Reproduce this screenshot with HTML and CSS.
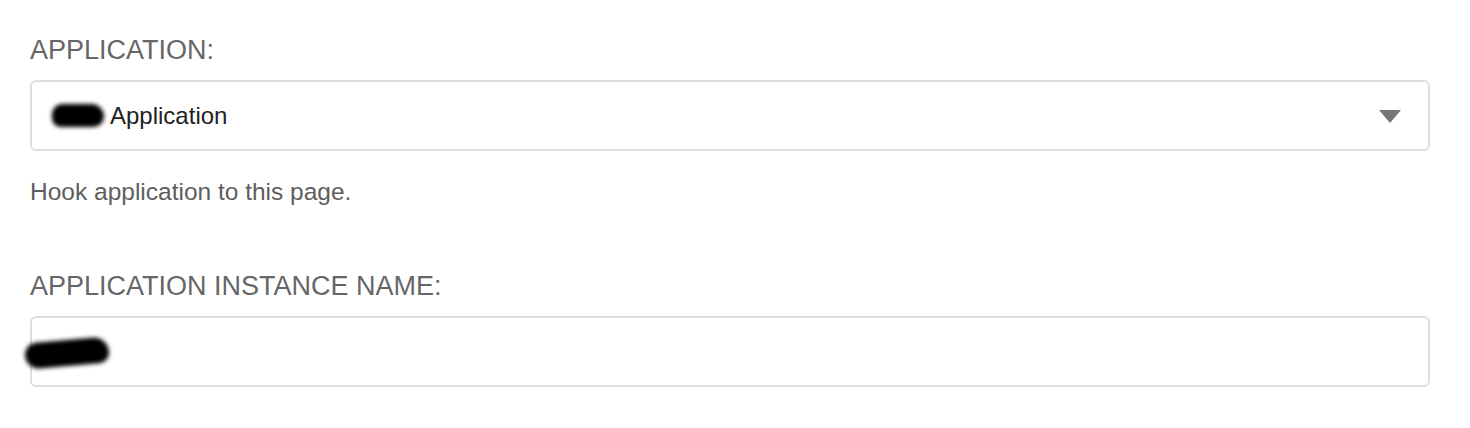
FILE: index.html
```html
<!DOCTYPE html>
<html>
<head>
<meta charset="utf-8">
<link rel="stylesheet" href="styles.css">
</head>
<body>
<div class="form">
  <div class="field">
    <label class="label">APPLICATION:</label>
    <div class="select">
      <span class="blob blob-a"></span>
      <span class="select-text">Application</span>
      <svg class="caret" width="22" height="13" viewBox="0 0 22 13"><path d="M0 0 H22 L11 13 Z" fill="#777"/></svg>
    </div>
    <p class="help">Hook application to this page.</p>
  </div>
  <div class="field field-2">
    <label class="label">APPLICATION INSTANCE NAME:</label>
    <div class="input">
      <span class="blob blob-b"></span>
    </div>
  </div>
</div>
</body>
</html>
```
FILE: styles.css
```css
html, body {
  margin: 0;
  padding: 0;
  background: #fff;
}
body {
  font-family: "Liberation Sans", Arial, Helvetica, sans-serif;
  width: 1470px;
  height: 428px;
  overflow: hidden;
}
.form {
  padding: 35px 40px 0 30px;
}
.field {
  display: flex;
  flex-direction: column;
}
.field-2 {
  margin-top: 65px;
}
.label {
  display: block;
  font-size: 27px;
  line-height: 31px;
  color: #666;
  margin: 0 0 14px 0;
}
.select, .input {
  box-sizing: border-box;
  width: 1400px;
  height: 71px;
  border: 2px solid #dedede;
  border-radius: 6px;
  display: flex;
  align-items: center;
  padding: 0 27px 0 20px;
  background: #fff;
}
.select-text {
  font-size: 24px;
  color: #222;
  margin-left: 6px;
  flex: 1;
  padding-top: 1px;
}
.caret {
  display: block;
  margin-top: 1px;
}
.blob {
  display: inline-block;
  background: #000;
  filter: blur(2px);
}
.blob-a {
  width: 52px;
  height: 23px;
  border-radius: 12px 14px 12px 10px;
}
.blob-b {
  width: 84px;
  height: 26px;
  border-radius: 16px 20px 14px 18px;
  margin-left: -27px;
  margin-top: 2px;
  transform: rotate(-5deg);
}
.help {
  margin: 27px 0 0 0;
  font-size: 24.5px;
  line-height: 28px;
  color: #5e5e5e;
}
```
